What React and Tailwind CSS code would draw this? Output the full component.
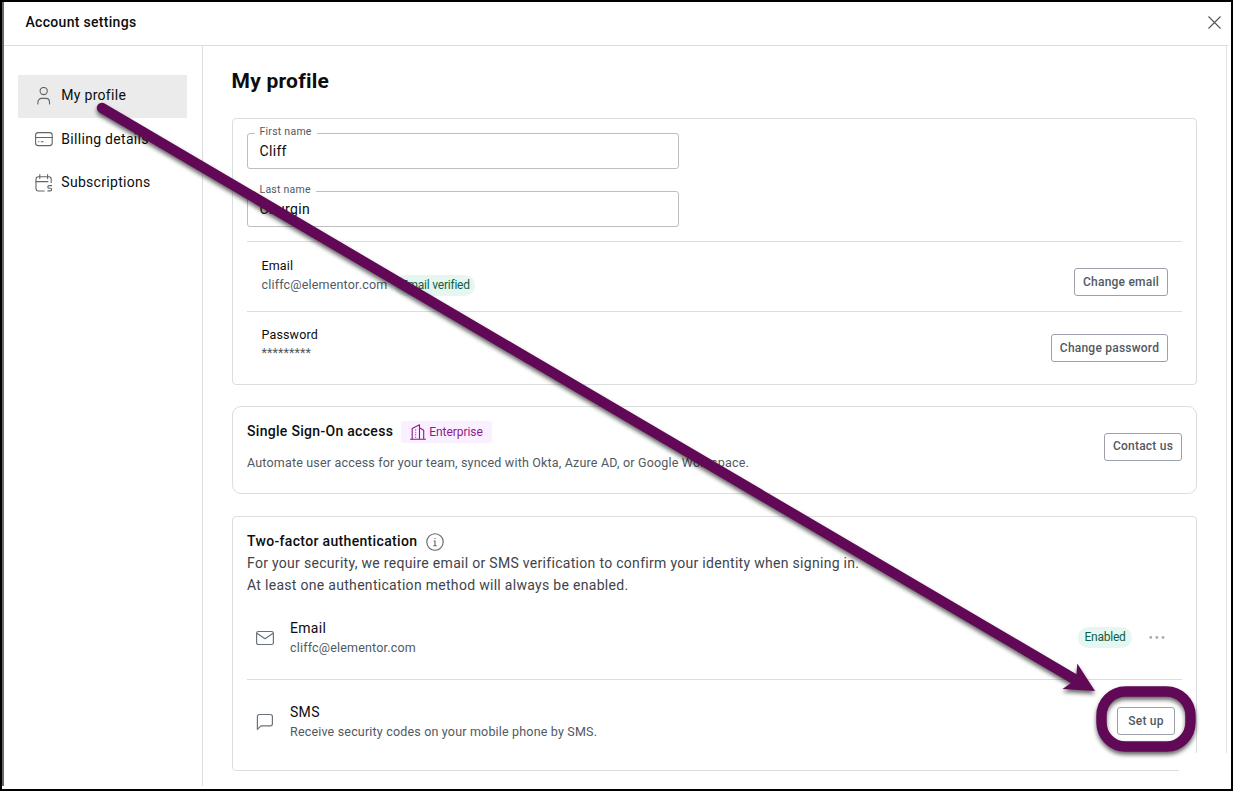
import React from 'react';

const UserIcon = () => (
    <svg width="18" height="18" viewBox="0 0 18 18" fill="none" stroke="currentColor" strokeWidth="1.1" strokeLinecap="round">
        <circle cx="8.7" cy="4" r="3.6" />
        <path d="M2.9 16.9v-1.6c0-2.2 1.5-3.9 3.7-3.9h4.2c2.2 0 3.7 1.7 3.7 3.9v1.6" />
    </svg>
);

const CardIcon = () => (
    <svg width="18" height="18" viewBox="0 0 18 18" fill="none" stroke="currentColor" strokeWidth="1.1" strokeLinecap="round">
        <rect x="0.6" y="2.6" width="16.6" height="13" rx="2.6" />
        <path d="M0.6 7.5h16.6M3.6 11.8h.3M6.2 11.8h2" />
    </svg>
);

const SubscriptionIcon = () => (
    <svg width="18" height="18" viewBox="0 0 18 18" fill="none" stroke="currentColor" strokeWidth="1.1" strokeLinecap="round">
        <path d="M9.2 17H3.4C2 17 1 16 1 14.6V5.2C1 3.8 2 2.8 3.4 2.8h10.4c1.4 0 2.4 1 2.4 2.4v3.2" />
        <path d="M4.8 0.6v4M12.6 0.6v4M1 7.6h12" />
        <path d="M16.6 11.6h-2.5a1.15 1.15 0 0 0 0 2.6h1.2a1.25 1.25 0 0 1 0 2.7h-2.4" />
    </svg>
);

const BuildingIcon = () => (
    <svg width="16" height="16" viewBox="0 0 16 16" fill="none" stroke="currentColor" strokeWidth="1.1" strokeLinecap="round" strokeLinejoin="round">
        <path d="M0.6 15.3h14.9M2.2 15.3V4.4L9.5 0.8v14.5M9.5 3.8l4.2 2.4v9.1" />
        <path d="M5.7 5.8v.1M5.7 8.2v.1M5.7 10.6v.1M5.7 13v.1" />
    </svg>
);

const InfoIcon = () => (
    <svg width="18" height="18" viewBox="0 0 18 18" fill="none" stroke="currentColor" strokeWidth="1.1" strokeLinecap="round">
        <circle cx="9" cy="9" r="8.2" />
        <path d="M9 5.2v.3M8 8h1v4.6M7.8 12.7h2.5" />
    </svg>
);

const MailIcon = () => (
    <svg width="18" height="18" viewBox="0 0 18 18" fill="none" stroke="currentColor" strokeWidth="1.2" strokeLinejoin="round">
        <rect x="0.6" y="2.5" width="16.8" height="13" rx="1.8" />
        <path d="M0.9 4.2L9 9.7l8.1-5.5" />
    </svg>
);

const MessageIcon = () => (
    <svg width="18" height="18" viewBox="0 0 18 18" fill="none" stroke="currentColor" strokeWidth="1.2" strokeLinejoin="round">
        <path d="M1.4 16.4V3.6c0-1.2.9-2.1 2.1-2.1h10.8c1.2 0 2.1.9 2.1 2.1v7.2c0 1.2-.9 2.1-2.1 2.1H4.9z" />
    </svg>
);

const navItems = [
    { label: 'My profile', icon: UserIcon, active: true },
    { label: 'Billing details', icon: CardIcon },
    { label: 'Subscriptions', icon: SubscriptionIcon },
];

const OutlineButton = ({ children, className = '' }) => (
    <button className={`h-7 shrink-0 rounded-[3px] border border-[#9da1a9] text-center text-[12px] font-medium leading-none tracking-[0.22px] text-[#515962] ${className}`}>
        {children}
    </button>
);

const TextField = ({ label, value }) => (
    <div className="relative h-9 w-[432px] rounded-[3px] border border-[#bcbec1] pl-[11.5px]">
        <span className="absolute -top-[9px] left-[7px] bg-white pl-[4.5px] pr-[5px] text-[10.5px] leading-[14px] tracking-[0.25px] text-[#515962]">
            {label}
        </span>
        <div className="pt-2 text-[14px] leading-[18px] tracking-[0.33px]">{value}</div>
    </div>
);

const Chip = ({ children, className = '' }) => (
    <span className={`h-[21px] rounded-full bg-[#e6f6f0] text-center text-[12px] leading-[21px] tracking-[-0.22px] text-[#0f5f43] ${className}`}>
        {children}
    </span>
);

const Annotation = () => (
    <svg className="pointer-events-none absolute -left-0.5 -top-0.5 h-[791px] w-[1233px] drop-shadow-[0_3px_2px_rgba(0,0,0,0.6)]" viewBox="0 0 1233 791">
        <path d="M102 108L1076 680" stroke="#610856" strokeWidth="10.4" strokeLinecap="round" />
        <path d="M1095 691L1077.3 663.5L1076 679.5L1062.5 689Z" fill="#610856" />
        <rect x="1101.5" y="691.5" width="89" height="55" rx="24" fill="none" stroke="#610856" strokeWidth="10.4" />
    </svg>
);

export default function App() {
    return (
        <div className="relative flex h-[791px] w-[1233px] overflow-hidden border-2 border-black bg-white font-[Roboto,sans-serif] text-[#0c0d0e]">
            <div className="h-[784px] w-0.5 shrink-0 bg-[#6b6769]" />
            <div className="flex w-[1224px] flex-col">
                <header className="flex h-11 items-center justify-between border-b border-[#dcdddf] pb-[3px] pl-[21.5px] pr-[7px]">
                    <h1 className="text-[14px] font-medium leading-5 tracking-[0.3px]">Account settings</h1>
                    <svg className="mt-px" width="13" height="13" viewBox="0 0 13 13" stroke="#515457" strokeWidth="1.1">
                        <path d="M0.5 0.5l12 12M12.5 0.5l-12 12" />
                    </svg>
                </header>

                <div className="flex">
                    <nav className="h-[740px] w-[199px] border-r border-[#dcdddf] pl-3.5 pt-[29px]">
                        {navItems.map(({ label, icon: Icon, active }) => (
                            <a
                                key={label}
                                className={`mb-[0.5px] flex h-[43px] w-[169px] items-center gap-2 pb-0.5 pl-[17px] text-[#636568] ${active ? 'bg-[#ebebeb]' : ''}`}
                            >
                                <Icon />
                                <span className="pb-px pl-[0.3px] text-[14px] leading-5 tracking-[0.3px] text-[#0c0d0e]">{label}</span>
                            </a>
                        ))}
                    </nav>

                    <main className="h-[707px] w-[1024px] border-r border-[#e4e4e6] pl-[29px] pt-[21px]">
                        <h2 className="-ml-[0.5px] h-[51px] text-[21px] font-bold leading-[28px] tracking-[0.25px]">My profile</h2>

                        {/* Personal details */}
                        <section className="h-[267px] w-[965px] rounded border border-[#dcdddf] px-3.5 pt-3.5">
                            <div className="flex flex-col gap-[22px] pb-3.5">
                                <TextField label="First name" value="Cliff" />
                                <TextField label="Last name" value="Churgin" />
                            </div>
                            <div className="flex h-[70px] justify-between border-t border-[#dcdddf] px-3.5">
                                <div className="pl-[0.5px] pt-[15px]">
                                    <div className="text-[12.5px] leading-[18px] tracking-[0.15px]">Email</div>
                                    <div className="flex items-center gap-2">
                                        <span className="pb-0.5 text-[12.5px] leading-[18px] tracking-[0.18px] text-[#515962]">cliffc@elementor.com</span>
                                        <Chip className="w-[80px]">Email verified</Chip>
                                    </div>
                                </div>
                                <OutlineButton className="mt-[26px] w-[94px]">Change email</OutlineButton>
                            </div>
                            <div className="flex justify-between border-t border-[#dcdddf] px-3.5">
                                <div className="pl-[0.5px] pt-[14px]">
                                    <div className="text-[12.5px] leading-[18px] tracking-[0.15px]">Password</div>
                                    <div className="text-[12.5px] leading-[18px] tracking-[0.12px] text-[#515962]">*********</div>
                                </div>
                                <OutlineButton className="mt-[22px] w-[117px]">Change password</OutlineButton>
                            </div>
                        </section>

                        {/* SSO */}
                        <section className="mt-[21px] flex h-[88px] w-[965px] justify-between rounded-[9px] border border-[#dcdddf] px-3.5 pt-3.5">
                            <div>
                                <div className="flex h-[22px] items-center gap-2">
                                    <h3 className="pb-0.5 text-[14px] font-medium leading-5 tracking-[0.3px]">Single Sign-On access</h3>
                                    <span className="flex h-[22px] w-[91px] items-center gap-[3px] rounded-[3px] bg-[#fbf0ff] pl-[9px] text-[12px] tracking-[-0.05px] text-[#8c1a8c]">
                                        <BuildingIcon />
                                        Enterprise
                                    </span>
                                </div>
                                <p className="pt-[11px] text-[12.5px] leading-[18px] tracking-[0.18px] text-[#515962]">
                                    Automate user access for your team, synced with Okta, Azure AD, or Google Workspace.
                                </p>
                            </div>
                            <OutlineButton className="mt-3 w-[78px] pb-0.5">Contact us</OutlineButton>
                        </section>

                        {/* 2FA, clipped at the bottom right corner */}
                        <section className="relative mt-[22px] h-[255px] w-[965px] rounded border border-[#dcdddf] px-3.5 pt-3.5">
                            <div className="flex h-[20px] items-center gap-2">
                                <h3 className="text-[14px] font-medium leading-5 tracking-[0.33px]">Two-factor authentication</h3>
                                <span className="pl-[0.5px] pt-px text-[#5f6265]"><InfoIcon /></span>
                            </div>
                            <p className="pt-px text-[14px] leading-[22px] tracking-[0.3px] text-[#3f444b]">
                                For your security, we require email or SMS verification to confirm your identity when signing in.
                                <br />
                                At least one authentication method will always be enabled.
                            </p>
                            <div className="flex h-[84px] items-start border-b border-[#dcdddf] pl-[9px] pr-[17px] pt-[22px]">
                                <span className="mt-[11px] text-[#69727d]"><MailIcon /></span>
                                <div className="flex-1 pl-4">
                                    <div className="text-[14px] leading-5 tracking-[0.3px]">Email</div>
                                    <div className="pt-px text-[12.5px] leading-[18px] tracking-[0.18px] text-[#515962]">cliffc@elementor.com</div>
                                </div>
                                <Chip className="mr-[17px] mt-[9px] w-[54px]">Enabled</Chip>
                                <svg className="mt-[17px]" width="16" height="5" viewBox="0 0 16 5" fill="#a9abae">
                                    <circle cx="1.8" cy="2.5" r="1.4" />
                                    <circle cx="7.9" cy="2.5" r="1.4" />
                                    <circle cx="14" cy="2.5" r="1.4" />
                                </svg>
                            </div>
                            <div className="flex items-start pl-[9px] pr-[7px] pt-[22px]">
                                <span className="mt-[11px] text-[#69727d]"><MessageIcon /></span>
                                <div className="flex-1 pl-4">
                                    <div className="text-[14px] leading-5 tracking-[0.3px]">SMS</div>
                                    <div className="pt-px text-[12.5px] leading-[18px] tracking-[0.18px] text-[#515962]">Receive security codes on your mobile phone by SMS.</div>
                                </div>
                                <OutlineButton className="mt-[5px] w-[58px]">Set up</OutlineButton>
                            </div>
                            <div className="absolute -bottom-px -right-px h-[18px] w-[18px] bg-white" />
                        </section>
                    </main>
                </div>
            </div>
            <Annotation />
        </div>
    );
}
